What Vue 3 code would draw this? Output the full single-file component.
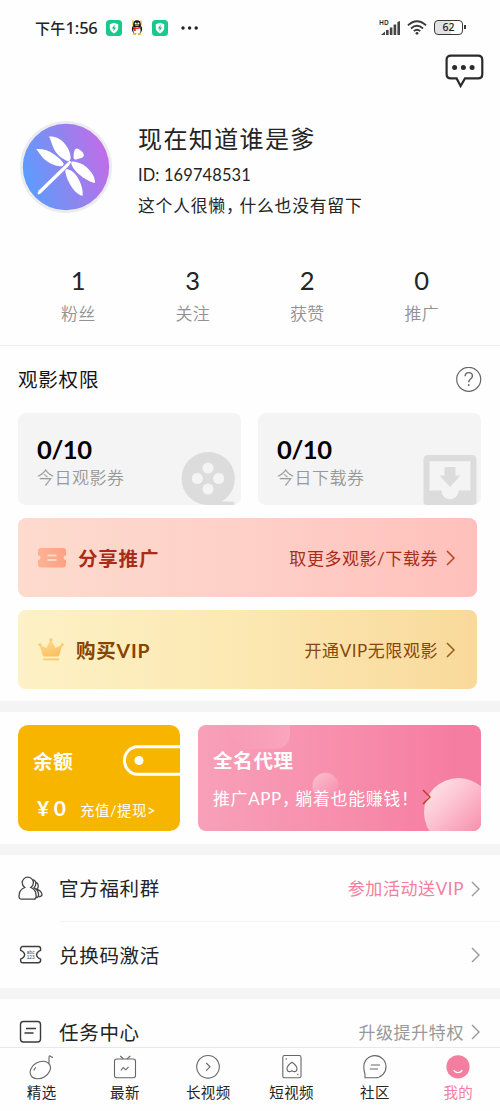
<script setup>
const stats = [
  { value: '1', label: '粉丝' },
  { value: '3', label: '关注' },
  { value: '2', label: '获赞' },
  { value: '0', label: '推广' },
]
const tabs = [
  { id: 'pick', label: '精选' },
  { id: 'new', label: '最新' },
  { id: 'long', label: '长视频' },
  { id: 'short', label: '短视频' },
  { id: 'club', label: '社区' },
  { id: 'mine', label: '我的', active: true },
]
</script>

<template>
  <div class="screen">
    <header class="status">
      <span class="clock">下午<b>1:56</b></span>
      <svg class="shield" width="16" height="16" viewBox="0 0 16 16"><rect width="16" height="16" rx="3.5" fill="#18c98a" /><path d="M8 2.8 12.2 4.2V8.3Q12 11.4 8 13.4 4 11.4 3.8 8.3V4.2Z" fill="#fff" /><path d="M8.7 4.8 5.9 8.6H7.7L7.3 11.2 10.1 7.4H8.3Z" fill="#18b57c" /></svg>
      <svg class="penguin" width="12" height="15" viewBox="0 0 12 15"><path d="M1 .5H3L2 5H1ZM9 .5H11V5H10Z" fill="#f3c969" /><ellipse cx="6" cy="9" rx="5.2" ry="5" fill="#181818" /><ellipse cx="6" cy="4.5" rx="3.8" ry="4.3" fill="#181818" /><ellipse cx="6" cy="10.5" rx="3.6" ry="3.4" fill="#fff" /><circle cx="4.7" cy="3.4" r="1" fill="#fff" /><circle cx="7.3" cy="3.4" r="1" fill="#fff" /><ellipse cx="6" cy="5.2" rx="2.1" ry=".8" fill="#f4a521" /><path d="M2 6.6Q6 8.8 10 6.6L10.2 8.1Q7 9.4 4.8 8.9V11H3V8.4L1.8 7.9Z" fill="#e42c24" /><path d="M2 14H5M7 14H10" stroke="#f0a020" stroke-width="1.4" /></svg>
      <svg class="shield two" width="16" height="16" viewBox="0 0 16 16"><rect width="16" height="16" rx="3.5" fill="#18c98a" /><path d="M8 2.8 12.2 4.2V8.3Q12 11.4 8 13.4 4 11.4 3.8 8.3V4.2Z" fill="#fff" /><path d="M8.7 4.8 5.9 8.6H7.7L7.3 11.2 10.1 7.4H8.3Z" fill="#18b57c" /></svg>
      <svg class="dots" width="18" height="4" viewBox="0 0 18 4"><g fill="#222"><circle cx="2" cy="2" r="1.7" /><circle cx="8.6" cy="2" r="1.7" /><circle cx="15.2" cy="2" r="1.7" /></g></svg>
      <div class="signal">
        <span class="hd">HD</span>
        <svg width="20" height="14" viewBox="0 0 20 14"><path d="M0 14 4 10.5V14ZM5 9H7.6V14H5ZM8.8 6.5H11.4V14H8.8ZM12.6 3.5H15.2V14H12.6ZM16.4 1 19 0V14H16.4Z" fill="#444" /></svg>
      </div>
      <svg class="wifi" width="20" height="15" viewBox="0 0 20 15"><g fill="none" stroke="#3a3a3a" stroke-width="1.8"><path d="M.9 5.4Q10-2.8 19.1 5.4" /><path d="M4 8.5Q10 3 16 8.5" /><path d="M6.8 11.2Q10 8.2 13.2 11.2" /></g><circle cx="10" cy="13.3" r="1.4" fill="#3a3a3a" /></svg>
      <div class="battery"><span>62</span></div>
    </header>

    <div class="topbar">
      <svg width="39" height="34" viewBox="0 0 39 34"><path d="M6 1.6H33Q37.3 1.6 37.3 6V20.3Q37.3 24.4 33 24.4H20L15.6 32 11.6 24.4H6Q1.6 24.4 1.6 20.3V6Q1.6 1.6 6 1.6Z" fill="none" stroke="#2b2b2b" stroke-width="2.2" /><g fill="#2b2b2b"><circle cx="9.6" cy="13.4" r="2.5" /><circle cx="18.4" cy="13.4" r="2.5" /><circle cx="27.1" cy="13.4" r="2.5" /></g></svg>
    </div>

    <section class="profile">
      <svg class="avatar" width="92" height="92" viewBox="0 0 92 92">
        <defs><linearGradient id="av" x1="0" y1=".65" x2="1" y2=".35"><stop offset="0" stop-color="#5b9dff" /><stop offset=".5" stop-color="#8c86ee" /><stop offset="1" stop-color="#c36bea" /></linearGradient></defs>
        <circle cx="46" cy="46" r="46" fill="#ececee" /><circle cx="46" cy="46" r="43.2" fill="url(#av)" />
        <g fill="#fff">
          <path d="M54.5 29.5C55 27.5 57 26.8 58.5 28C61 29.5 63.5 31.5 63.8 33.8C64 36 62 37 60 37.3C57.5 38.3 54.5 39.5 53.8 37.5C53.3 35 53.8 32 54.5 29.5Z" />
          <path d="M29 15.5C35.5 15.2 41 17.7 45 23C48 27 50.5 31.5 50.6 36C50.7 39 49.3 40.8 47 39.7C43.5 38.5 38 35 34.5 29C32 25 31.5 20 29 15.5Z" />
          <path d="M16 28C23 27.6 29 29.5 34 33.2C38 36 42 39.5 43.6 42.5C44 45 42 45.5 39.5 45.3C34.5 44.5 28 42 23.5 37.5C20.5 34.5 18.5 30.5 16 28Z" />
          <path d="M51.5 40.5C57 40.5 62 42.5 66 45.8C71 50 75 55.5 75 62C71 61.3 67 59 63 56.5C58 53 53 48 51.3 43Z" />
          <path d="M46.5 48C50 48.5 53 50.5 55.5 53.5C59.5 58.5 63.5 67 62.5 75C59 74 56 71.5 53.5 68.5C49.5 63.5 45.5 55.5 45.3 49.5Z" />
          <path d="M49.7 39.5 51.3 41 48.3 45.5 20.6 72.6Q18 74.2 17.6 72.5 17.6 71 19 69.3L45 44Z" />
        </g>
      </svg>
      <div class="who">
        <div class="name">现在知道谁是爹</div>
        <div class="uid">ID: 169748531</div>
        <div class="bio">这个人很懒<span class="comma">，</span>什么也没有留下</div>
      </div>
    </section>

    <section class="stats">
      <div v-for="s in stats" :key="s.label" class="stat"><div class="num">{{ s.value }}</div><div class="lab">{{ s.label }}</div></div>
    </section>

    <section class="rights">
      <div class="head">
        <span>观影权限</span>
        <svg width="26" height="26" viewBox="0 0 26 26" fill="none" stroke="#666" stroke-width="1.2"><circle cx="12.7" cy="12.3" r="12" /><path d="M9.1 9.3Q9.2 5.6 12.8 5.6T16.4 9Q16.4 10.7 14.5 12 12.7 13.3 12.7 15.3" stroke-width="1.4" /><circle cx="12.7" cy="18" r=".9" fill="#666" stroke="none" /></svg>
      </div>
      <div class="quotas">
        <div class="quota">
          <div class="qn">0/10</div><div class="ql">今日观影券</div>
          <svg class="film" width="54" height="53" viewBox="0 0 54 53"><path fill="#dcdcdc" fill-rule="evenodd" d="M27 0A26.5 26.5 0 0 1 40.5 49.5H51.5Q53.5 49.5 53.5 51V53H27A26.5 26.5 0 0 1 27 0ZM27 10.5A5.5 5.5 0 1 0 27 21.5A5.5 5.5 0 1 0 27 10.5ZM16.3 21A5.5 5.5 0 1 0 16.3 32A5.5 5.5 0 1 0 16.3 21ZM37.7 21A5.5 5.5 0 1 0 37.7 32A5.5 5.5 0 1 0 37.7 21ZM27 31.5A5.5 5.5 0 1 0 27 42.5A5.5 5.5 0 1 0 27 31.5Z" /></svg>
        </div>
        <div class="quota">
          <div class="qn">0/10</div><div class="ql">今日下载券</div>
          <svg class="inbox" width="54" height="50" viewBox="0 0 54 50"><path fill="#dcdcdc" fill-rule="evenodd" d="M5 0H49Q53.5 0 53.5 5V47Q53.5 50 50 50H4Q.5 50 .5 47V5Q.5 0 5 0ZM6.5 6.2V35.5H18.5C18.5 47 35.5 47 35.5 35.5H47.5V6.2Z" /><path d="M21.5 12H32.5V20.5H37.5L27 32 16.5 20.5H21.5Z" fill="#dcdcdc" /></svg>
        </div>
      </div>
      <div class="banner share">
        <svg width="28" height="20" viewBox="0 0 28 20"><defs><linearGradient id="tk"><stop stop-color="#fcb294" /><stop offset="1" stop-color="#fca283" /></linearGradient></defs><path d="M3 0H25Q28 0 28 3V7.5Q25.5 7.5 25.5 9.7T28 12V16.5Q28 19.5 25 19.5H3Q0 19.5 0 16.5V12Q2.5 12 2.5 9.7T0 7.5V3Q0 0 3 0Z" fill="url(#tk)" /><path d="M9.5 7.5H18.5M9.5 12H18.5" stroke="#ffd8ca" stroke-width="1.8" /></svg>
        <strong>分享推广</strong>
        <span class="more">取更多观影/下载券</span>
        <svg class="arrow" width="9" height="16" viewBox="0 0 9 16"><path d="M1 1 8 8 1 15" fill="none" stroke="#b9401d" stroke-width="1.5" /></svg>
      </div>
      <div class="banner vip">
        <svg width="26" height="23" viewBox="0 0 26 23"><defs><linearGradient id="cr" x2=".5" y2="1"><stop stop-color="#ffdc94" /><stop offset="1" stop-color="#fac163" /></linearGradient></defs><g fill="url(#cr)"><path d="M1.5 6.5 8.2 10 12.8 2 17.5 10 24.5 6.5 21.2 17.5Q21 18.5 20 18.5H6Q5 18.5 4.7 17.5Z" /><circle cx="1.8" cy="6.5" r="1.5" /><circle cx="12.8" cy="1.8" r="1.7" /><circle cx="24.2" cy="6.5" r="1.5" /><rect x="4.8" y="20.2" width="16.4" height="2.1" rx="1" /></g></svg>
        <strong>购买VIP</strong>
        <span class="more">开通VIP无限观影</span>
        <svg class="arrow" width="9" height="16" viewBox="0 0 9 16"><path d="M1 1 8 8 1 15" fill="none" stroke="#965917" stroke-width="1.5" /></svg>
      </div>
    </section>

    <section class="money">
      <div class="wallet">
        <strong>余额</strong>
        <div class="cash"><b>¥ 0</b><span>充值/提现&gt;</span></div>
        <svg width="57" height="31" viewBox="0 0 57 31"><path d="M57 1.7H14.5A13 13.8 0 0 0 14.5 29.3H57" fill="none" stroke="#fff" stroke-width="3" /><circle cx="16" cy="15.5" r="4.5" fill="#fff" /></svg>
      </div>
      <div class="agent">
        <svg class="bubbles" width="284" height="106" viewBox="0 0 284 106">
          <defs>
            <linearGradient id="b1" x1="0" y1="0" x2="1" y2="1"><stop stop-color="#ffeaf0" /><stop offset=".35" stop-color="#fdc7d5" /><stop offset=".8" stop-color="#f78fac" /></linearGradient>
            <linearGradient id="b2" x1="0" y1="0" x2=".8" y2="1"><stop stop-color="#fcc0d0" /><stop offset="1" stop-color="#f78eac" /></linearGradient>
            <linearGradient id="b3"><stop stop-color="#fba8bf" stop-opacity=".1" /><stop offset="1" stop-color="#fbafc5" /></linearGradient>
          </defs>
          <path d="M31 0H92V10Q91 24 75 24H50Q34 20 31 0Z" fill="url(#b3)" opacity=".65" />
          <circle cx="127.5" cy="61" r="13.2" fill="url(#b2)" /><ellipse cx="260.5" cy="87.5" rx="34.5" ry="34.5" fill="url(#b1)" />
        </svg>
        <strong>全名代理</strong>
        <div class="slogan">推广APP<span class="comma">，</span>躺着也能赚钱！</div>
        <svg class="arrow" width="9" height="16" viewBox="0 0 9 16"><path d="M1 1 8 8 1 15" fill="none" stroke="#c43d1c" stroke-width="1.5" /></svg>
      </div>
    </section>

    <section class="menu">
      <div class="row ruled">
        <svg width="26" height="26" viewBox="0 0 26 26" fill="none" stroke="#444" stroke-width="1.3"><path d="M6.8 11.5Q4.2 9.4 4.2 6.8A5.6 5.6 0 0 1 15.4 6.8Q15.4 9.4 12.8 11.5 18.2 13.8 18.2 20.2 18.2 23.2 15.8 23.2H3.4Q1 23.2 1 20.2 1 13.8 6.8 11.5Z" /><path d="M14.4 3.6Q17.8 4.2 17.8 7.6 17.8 10.2 16 11.8 20.4 14 20.6 18.5 20.7 21.3 18.4 21.7M17.8 6.2Q20.3 7.4 20.3 10 20.3 11.8 19 13 23.8 15.4 24 18.6 24 20.6 21 20.8" /></svg>
        <span class="title">官方福利群</span><span class="hint pink">参加活动送VIP</span>
        <svg class="arrow" width="9" height="16" viewBox="0 0 9 16"><path d="M1 1 8 8 1 15" fill="none" stroke="#999" stroke-width="1.4" /></svg>
      </div>
      <div class="row second">
        <svg width="26" height="20" viewBox="0 0 26 20"><path d="M5 1.5H20.5Q22.6 1.5 22.6 4V5.3Q18.6 7 18.6 9.7T22.6 14.2V15.3Q22.6 17.8 20.2 17.8H5Q2.6 17.8 2.6 15.3V14.2Q6.6 12.4 6.6 9.7T2.6 5.3V4Q2.6 1.5 5 1.5Z" fill="none" stroke="#3d3d3d" stroke-width="1.4" /><text x="12.7" y="8.8" text-anchor="middle" font-size="4.8">abc</text><text x="12.7" y="13.9" text-anchor="middle" font-size="4.8">123</text></svg>
        <span class="title">兑换码激活</span>
        <svg class="arrow" width="9" height="16" viewBox="0 0 9 16"><path d="M1 1 8 8 1 15" fill="none" stroke="#999" stroke-width="1.4" /></svg>
      </div>
      <div class="band"></div>
      <div class="row third">
        <svg width="26" height="24" viewBox="0 0 26 24" fill="none" stroke="#3a3a3a" stroke-width="1.4"><rect x="2.5" y="1.5" width="20" height="20.5" rx="3" /><path d="M8 8.5H18M6.5 13H15.5" /></svg>
        <span class="title">任务中心</span><span class="hint">升级提升特权</span>
        <svg class="arrow" width="9" height="16" viewBox="0 0 9 16"><path d="M1 1 8 8 1 15" fill="none" stroke="#999" stroke-width="1.4" /></svg>
      </div>
    </section>

    <nav class="tabs">
      <div v-for="t in tabs" :key="t.id" class="tab" :class="{ active: t.active }">
        <svg width="26" height="26" viewBox="0 0 26 26" fill="none" stroke="#666" stroke-width="1.1">
          <g v-if="t.id === 'pick'"><ellipse cx="11.3" cy="16" rx="10.8" ry="8" transform="rotate(-30 11.3 16)" /><path d="M20 9.5V3.5Q20 1.2 21.5 2.2 22.8 3.5 24 3.3M4.8 16.5Q5.3 14.5 7 13.5" /></g>
          <g v-else-if="t.id === 'new'"><rect x="2.5" y="5" width="21" height="18.8" rx="2.2" /><path d="M8.3 2 11.5 5M18.3 2 15 5M8.8 16.5 11.2 13.5 13.8 15.8 16.5 12.8" /></g>
          <g v-else-if="t.id === 'long'"><circle cx="13" cy="12.8" r="11.3" /><path d="M11.2 9 15 12.8 11.2 16.6" /></g>
          <g v-else-if="t.id === 'short'"><rect x="3.8" y="1.5" width="18.2" height="22.3" rx="1.8" /><path d="M12.9 8.3Q8 11.8 8 14.7C8 18.6 12 18 12.9 16.5 13.8 18 18 18.6 18 14.7Q18 11.8 12.9 8.3ZM7.2 4.3V5.8M18.8 19.7V21.2" /></g>
          <g v-else-if="t.id === 'club'"><path d="M3 23.8V20.5Q1.8 16.5 1.8 12.8A11.1 11.1 0 1 1 12.9 23.8Z" /><path d="M8.8 11H18M7.8 15H16" /></g>
          <g v-else><circle cx="13" cy="12.8" r="11.6" fill="#f47ea0" stroke="none" /><path d="M8.6 16.2Q13 21 17.4 16.2" stroke="#fff" stroke-width="1.4" /></g>
        </svg>
        <span>{{ t.label }}</span>
      </div>
    </nav>
  </div>
</template>

<style>
body { background: #fff; overflow: hidden; }
</style>

<style scoped>
* { box-sizing: border-box; }
.screen { width: 500px; height: 1111px; display: flex; flex-direction: column; background: #fefefe; color: #242424; font-family: Lato, "Noto Sans CJK SC", sans-serif; overflow: hidden; white-space: nowrap; }
svg { display: block; flex: none; }
.comma { font-feature-settings: "halt" 1; margin-right: 4.3px; }

.status { height: 50px; padding: 5px 34px 0 35px; display: flex; align-items: center; }
.clock { width: 71px; font-size: 15px; font-weight: 500; line-height: 22px; letter-spacing: .3px; }
.clock b { font-size: 16.5px; font-weight: 500; font-family: "Noto Sans", sans-serif; letter-spacing: -.2px; }
.penguin { margin-left: 9px; }
.two { margin-left: 9px; }
.dots { margin-left: 13px; }
.signal { position: relative; margin-left: auto; padding-left: 1px; }
.hd { position: absolute; left: -1px; top: -2px; font: 600 6.5px/8px "Noto Sans", sans-serif; }
.wifi { margin-left: 6px; }
.battery { position: relative; width: 29px; height: 15px; margin-left: 7px; margin-right: 3px; border: 1.5px solid #3a3a3a; border-radius: 4px; background: linear-gradient(90deg, #e2e2e2 60%, #fff 60%); font: 500 10.5px/12px "Noto Sans", sans-serif; text-align: center; }
.battery::after { content: ""; position: absolute; right: -4px; top: 4px; width: 2px; height: 4px; background: #3a3a3a; }

.topbar { height: 54px; padding: 4px 16px 0 0; display: flex; justify-content: flex-end; }
.profile { height: 156px; padding: 17px 20px 0; display: flex; gap: 26px; }
.name { height: 36px; font-size: 24px; line-height: 36px; letter-spacing: 1.4px; }
.uid { height: 30px; margin-top: 3px; font-size: 16.4px; line-height: 30px; letter-spacing: .15px; }
.bio { height: 30px; margin-top: 1px; font-size: 16.8px; line-height: 30px; letter-spacing: .8px; }

.stats { height: 86px; padding: 2px 21px 0; display: grid; grid-template-columns: repeat(4, 1fr); border-bottom: 1px solid #eee; text-align: center; }
.num { font-size: 25.5px; line-height: 36px; }
.lab { font-size: 17px; line-height: 26px; margin-top: 3px; color: #929292; font-weight: 350; letter-spacing: .3px; }

.rights { height: 355px; padding: 18px 18px 0; }
.head { display: flex; justify-content: space-between; align-items: center; height: 32px; font-size: 19.5px; line-height: 30px; letter-spacing: .8px; color: #151515; }
.head span { margin-top: -1px; }
.quotas { display: grid; grid-template-columns: 1fr 1fr; gap: 17px; margin-top: 17px; padding-right: 1px; }
.quota { position: relative; height: 92px; padding: 21px 19px 0; border-radius: 8px; background: #f4f4f4; overflow: hidden; }
.qn { height: 30px; font-size: 25.5px; line-height: 31px; font-weight: 700; color: #000; letter-spacing: -.4px; }
.ql { font-size: 17px; line-height: 28px; color: #999; font-weight: 350; letter-spacing: .5px; }
.film { position: absolute; right: 6px; bottom: 0; }
.inbox { position: absolute; right: 4px; bottom: 0; }
.banner { width: 459px; height: 79px; padding: 0 22px 0 20px; display: flex; align-items: center; border-radius: 8px; }
.banner strong { font-size: 19.5px; font-weight: 700; letter-spacing: .8px; }
.more { margin-left: auto; font-size: 17px; letter-spacing: .55px; }
.arrow { margin-left: 8px; }
.share { margin-top: 13px; color: #a82c16; background: linear-gradient(90deg, #fddbcd, #fed0c7 50%, #ffc0bb); }
.share strong { margin-left: 12px; }
.vip { margin-top: 13px; color: #86470c; background: linear-gradient(90deg, #fdf1c5, #fce9b4 45%, #f9d99b); }
.vip strong { margin-left: 12px; color: #884300; }

.money { height: 154px; padding: 13px 19px 0 18px; display: flex; justify-content: space-between; border: solid #f4f4f4; border-width: 11px 0; color: #fff; }
.wallet { position: relative; width: 162px; height: 106px; padding: 23px 15px 0; border-radius: 10px; background: #f7b500; overflow: hidden; }
.wallet strong, .agent strong { display: block; font-size: 19.5px; line-height: 28px; letter-spacing: .7px; }
.wallet svg { position: absolute; right: 0; top: 20px; }
.cash { display: flex; align-items: baseline; margin-top: 17px; padding-left: 4px; line-height: 30px; }
.cash b { width: 43px; font-size: 21px; word-spacing: -.5px; }
.cash span { font-size: 14.5px; letter-spacing: .5px; }
.agent { position: relative; width: 283.5px; height: 106px; padding: 22px 15.5px 0; border-radius: 8px; overflow: hidden; background: linear-gradient(90deg, #f8a0b9, #f78eac 50%, #f67da2 90%); }
.agent strong, .slogan { position: relative; }
.bubbles { position: absolute; left: 0; top: 0; }
.slogan { margin-top: 9px; font-size: 17px; line-height: 30px; letter-spacing: .6px; }
.agent .arrow { position: absolute; right: 50px; top: 64px; }

.row { height: 67px; padding: 0 20px 0 18px; display: flex; align-items: center; position: relative; }
.ruled::after { content: ""; position: absolute; left: 60px; right: 0; bottom: 0; height: 1px; background: #f3f3f3; }
.second { height: 66px; }
.third { height: 66px; }
.band { height: 11px; background: #f4f4f4; }
.title { margin: -2px 0 0 15px; font-size: 19.5px; letter-spacing: .7px; }
.hint { margin: -2px 0 0 auto; font-size: 17px; letter-spacing: .6px; color: #999; }
.hint + .arrow { margin-left: 7px; }
.title + .arrow { margin-left: auto; }
.pink { color: #f47ea0; }
.second text { font-family: "Liberation Sans", sans-serif; fill: #444; }
.menu { height: 192px; overflow: hidden; flex: none; }

.tabs { position: relative; height: 64px; flex: none; display: grid; grid-template-columns: repeat(6, 1fr); border-top: 1px solid #e9e9e9; background: #fefefe; }
.tab { display: flex; flex-direction: column; align-items: center; padding-top: 6px; font-size: 14.5px; line-height: 22px; letter-spacing: .4px; }
.tab span { margin-top: 2px; }
.active { color: #f47ea0; }
</style>
